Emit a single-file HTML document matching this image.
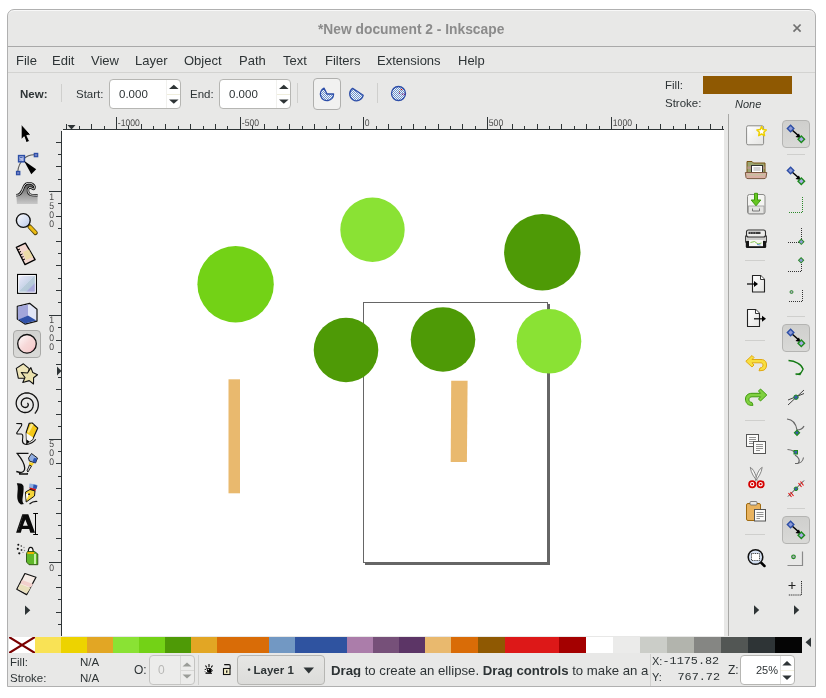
<!DOCTYPE html>
<html><head><meta charset="utf-8"><title>Inkscape</title>
<style>
html,body{margin:0;padding:0;}
#root{position:absolute;left:0;top:0;width:826px;height:698px;will-change:transform;}
body{width:826px;height:698px;overflow:hidden;background:#fff;position:relative;font-family:"Liberation Sans",sans-serif;color:#2e3436;}
.a{position:absolute;}
.win{left:7px;top:9px;width:807px;height:676px;border:1px solid #b0b0b0;border-radius:7px 7px 0 0;background:#e8e8e7;box-shadow:inset 0 1px 0 #f8f8f8;}
.t{position:absolute;white-space:nowrap;line-height:1;}
.menu{font-size:13px;color:#2e3436;top:54px;}
.rl{text-rendering:geometricPrecision;font-size:9.6px;fill:#4a4a4a;font-family:"Liberation Sans",sans-serif;}
.spin{position:absolute;background:#fff;border:1px solid #b6b6b3;border-radius:4px;box-sizing:border-box;}
.sep{position:absolute;width:1px;background:#cfcfcd;}
.hsep{position:absolute;height:1px;background:#cfcfcd;}
.btnp{position:absolute;box-sizing:border-box;border:1px solid #b4b4b2;border-radius:4px;background:#d4d4d2;}
</style></head>
<body><div id="root">
<div class="a win"></div>
<!-- title -->
<div class="t" style="left:318px;top:22.5px;font-size:13.8px;font-weight:bold;color:#8b8b8b;">*New document 2 - Inkscape</div>
<svg class="a" style="left:792px;top:23px" width="10" height="10"><path d="M1.5 1.5 L8.6 8.6 M8.6 1.5 L1.5 8.6" stroke="#707070" stroke-width="1.7"/></svg>
<div class="a" style="left:8px;top:46px;width:807px;height:1px;background:#a9a9a9"></div>
<!-- menu -->
<div class="t menu" style="left:16px">File</div>
<div class="t menu" style="left:52px">Edit</div>
<div class="t menu" style="left:91px">View</div>
<div class="t menu" style="left:135px">Layer</div>
<div class="t menu" style="left:184px">Object</div>
<div class="t menu" style="left:239px">Path</div>
<div class="t menu" style="left:283px">Text</div>
<div class="t menu" style="left:325px">Filters</div>
<div class="t menu" style="left:377px">Extensions</div>
<div class="t menu" style="left:458px">Help</div>
<div class="a" style="left:8px;top:72px;width:807px;height:1px;background:#d3d3d1"></div>
<!-- tool controls -->
<div class="t" style="left:20px;top:89px;font-size:11.5px;font-weight:bold;">New:</div>
<div class="sep" style="left:61px;top:84px;height:18px"></div>
<div class="t" style="left:76px;top:89px;font-size:11.5px;">Start:</div>
<div class="spin" style="left:109px;top:79px;width:72px;height:30px"></div>
<div class="t" style="left:119px;top:89px;font-size:11.5px;">0.000</div>
<svg class="a" style="left:166px;top:80px" width="14" height="28"><rect x="0" y="0" width="1" height="28" fill="#f1f1ee"/><rect x="1" y="14" width="13" height="1" fill="#efeddc"/><path d="M3 9 L7.8 4.8 L12.6 9 Z M3 19.5 L7.8 23.8 L12.6 19.5 Z" fill="#2e3436"/></svg>
<div class="t" style="left:190px;top:89px;font-size:11.5px;">End:</div>
<div class="spin" style="left:219px;top:79px;width:72px;height:30px"></div>
<div class="t" style="left:229px;top:89px;font-size:11.5px;">0.000</div>
<svg class="a" style="left:276px;top:80px" width="14" height="28"><rect x="0" y="0" width="1" height="28" fill="#f1f1ee"/><rect x="1" y="14" width="13" height="1" fill="#efeddc"/><path d="M3 9 L7.8 4.8 L12.6 9 Z M3 19.5 L7.8 23.8 L12.6 19.5 Z" fill="#2e3436"/></svg>
<div class="sep" style="left:297px;top:83px;height:20px"></div>
<div class="a" style="left:313px;top:78px;width:28px;height:32px;box-sizing:border-box;border:1px solid #b0b0ae;border-radius:4px;background:#f1f1f0"></div>
<div class="sep" style="left:377px;top:83px;height:20px"></div>
<svg class="a" style="left:0;top:0" width="420" height="110"><defs><pattern id="chk" width="2" height="2" patternUnits="userSpaceOnUse"><rect width="2" height="2" fill="#f4f6fa"/><rect width="1" height="1" fill="#6c94cc"/><rect x="1" y="1" width="1" height="1" fill="#6c94cc"/></pattern></defs>
<path d="M327 94 L333.6 94 A6.6 6.6 0 1 1 324 88.1 Z" fill="url(#chk)" stroke="#2d4ea8" stroke-width="1.3" stroke-linejoin="round"/>
<path d="M363.2 95.2 A6.8 6.8 0 1 1 352.6 88.4 Z" fill="url(#chk)" stroke="#2d4ea8" stroke-width="1.3" stroke-linejoin="round"/>
<circle cx="398.5" cy="93.5" r="7" fill="url(#chk)" stroke="#2d4ea8" stroke-width="1.3"/>
<circle cx="401.5" cy="89.5" r="0.8" fill="#b01010"/><circle cx="399.5" cy="91.5" r="0.6" fill="#806040"/><circle cx="399.5" cy="93.3" r="0.7" fill="#702080"/><circle cx="402.5" cy="94.3" r="0.7" fill="#702080"/><circle cx="404.5" cy="94.3" r="0.7" fill="#702080"/>
</svg>
<div class="t" style="left:665px;top:80px;font-size:11.5px;">Fill:</div>
<div class="a" style="left:703px;top:76px;width:89px;height:18px;background:#8f5902"></div>
<div class="t" style="left:665px;top:98px;font-size:11.5px;">Stroke:</div>
<div class="t" style="left:735px;top:98.5px;font-size:11px;font-style:italic;">None</div>
<!-- rulers & canvas -->
<div class="a" style="left:62px;top:130px;width:662px;height:506px;background:#fff;overflow:hidden"><svg style="position:absolute;left:-62px;top:-130px" width="826" height="698">
<rect x="365" y="304" width="185" height="261" fill="#666"/>
<rect x="363.5" y="302.5" width="184" height="260" fill="#fff" stroke="#666" stroke-width="1"/>
<circle cx="372.5" cy="229.8" r="32.2" fill="#8ae234"/>
<circle cx="235.6" cy="284.2" r="38.2" fill="#73d216"/>
<circle cx="542.3" cy="252.3" r="38.2" fill="#4e9a06"/>
<circle cx="346" cy="350" r="32.3" fill="#4e9a06"/>
<circle cx="443" cy="339.5" r="32.3" fill="#4e9a06"/>
<circle cx="549" cy="341.3" r="32.3" fill="#8ae234"/>
<rect x="228.5" y="379.3" width="11.5" height="114" fill="#e9b96e"/>
<path d="M451.2 380.8 L467.6 380.8 L466.9 462 L450.7 462 Z" fill="#e9b96e"/>
</svg>
</div>
<svg class="a" style="left:0;top:0" width="826" height="698" fill="#2e3436"><rect x="66" y="124" width="1" height="6"/><rect x="79" y="126" width="1" height="4"/><rect x="91" y="124" width="1" height="6"/><rect x="104" y="126" width="1" height="4"/><rect x="116" y="117" width="1" height="13"/><text transform="translate(117.8 126) scale(0.9 1)" class="rl">-1000</text><rect x="128" y="126" width="1" height="4"/><rect x="141" y="124" width="1" height="6"/><rect x="153" y="126" width="1" height="4"/><rect x="165" y="124" width="1" height="6"/><rect x="178" y="126" width="1" height="4"/><rect x="190" y="124" width="1" height="6"/><rect x="203" y="126" width="1" height="4"/><rect x="215" y="124" width="1" height="6"/><rect x="227" y="126" width="1" height="4"/><rect x="240" y="117" width="1" height="13"/><text transform="translate(241.8 126) scale(0.9 1)" class="rl">-500</text><rect x="252" y="126" width="1" height="4"/><rect x="264" y="124" width="1" height="6"/><rect x="277" y="126" width="1" height="4"/><rect x="289" y="124" width="1" height="6"/><rect x="302" y="126" width="1" height="4"/><rect x="314" y="124" width="1" height="6"/><rect x="326" y="126" width="1" height="4"/><rect x="339" y="124" width="1" height="6"/><rect x="351" y="126" width="1" height="4"/><rect x="363" y="117" width="1" height="13"/><text transform="translate(364.8 126) scale(0.9 1)" class="rl">0</text><rect x="376" y="126" width="1" height="4"/><rect x="388" y="124" width="1" height="6"/><rect x="401" y="126" width="1" height="4"/><rect x="413" y="124" width="1" height="6"/><rect x="425" y="126" width="1" height="4"/><rect x="438" y="124" width="1" height="6"/><rect x="450" y="126" width="1" height="4"/><rect x="462" y="124" width="1" height="6"/><rect x="475" y="126" width="1" height="4"/><rect x="487" y="117" width="1" height="13"/><text transform="translate(488.8 126) scale(0.9 1)" class="rl">500</text><rect x="500" y="126" width="1" height="4"/><rect x="512" y="124" width="1" height="6"/><rect x="524" y="126" width="1" height="4"/><rect x="537" y="124" width="1" height="6"/><rect x="549" y="126" width="1" height="4"/><rect x="561" y="124" width="1" height="6"/><rect x="574" y="126" width="1" height="4"/><rect x="586" y="124" width="1" height="6"/><rect x="599" y="126" width="1" height="4"/><rect x="611" y="117" width="1" height="13"/><text transform="translate(612.8 126) scale(0.9 1)" class="rl">1000</text><rect x="623" y="126" width="1" height="4"/><rect x="636" y="124" width="1" height="6"/><rect x="648" y="126" width="1" height="4"/><rect x="660" y="124" width="1" height="6"/><rect x="673" y="126" width="1" height="4"/><rect x="685" y="124" width="1" height="6"/><rect x="698" y="126" width="1" height="4"/><rect x="710" y="124" width="1" height="6"/><rect x="722" y="126" width="1" height="4"/><rect x="63" y="129" width="661" height="1"/><path d="M67.5 125 L75.5 125 L71.5 129.5 Z"/></svg>
<svg class="a" style="left:0;top:0" width="826" height="698" fill="#2e3436"><rect x="56" y="142" width="6" height="1"/><rect x="58" y="154" width="4" height="1"/><rect x="56" y="166" width="6" height="1"/><rect x="58" y="179" width="4" height="1"/><rect x="49" y="191" width="13" height="1"/><text transform="translate(49.2 199.60) scale(0.9 1)" class="rl">1</text><text transform="translate(49.2 208.60) scale(0.9 1)" class="rl">5</text><text transform="translate(49.2 217.60) scale(0.9 1)" class="rl">0</text><text transform="translate(49.2 226.60) scale(0.9 1)" class="rl">0</text><rect x="58" y="203" width="4" height="1"/><rect x="56" y="216" width="6" height="1"/><rect x="58" y="228" width="4" height="1"/><rect x="56" y="241" width="6" height="1"/><rect x="58" y="253" width="4" height="1"/><rect x="56" y="265" width="6" height="1"/><rect x="58" y="278" width="4" height="1"/><rect x="56" y="290" width="6" height="1"/><rect x="58" y="302" width="4" height="1"/><rect x="49" y="315" width="13" height="1"/><text transform="translate(49.2 323.27) scale(0.9 1)" class="rl">1</text><text transform="translate(49.2 332.27) scale(0.9 1)" class="rl">0</text><text transform="translate(49.2 341.27) scale(0.9 1)" class="rl">0</text><text transform="translate(49.2 350.27) scale(0.9 1)" class="rl">0</text><rect x="58" y="327" width="4" height="1"/><rect x="56" y="340" width="6" height="1"/><rect x="58" y="352" width="4" height="1"/><rect x="56" y="364" width="6" height="1"/><rect x="58" y="377" width="4" height="1"/><rect x="56" y="389" width="6" height="1"/><rect x="58" y="401" width="4" height="1"/><rect x="56" y="414" width="6" height="1"/><rect x="58" y="426" width="4" height="1"/><rect x="49" y="439" width="13" height="1"/><text transform="translate(49.2 446.93) scale(0.9 1)" class="rl">5</text><text transform="translate(49.2 455.93) scale(0.9 1)" class="rl">0</text><text transform="translate(49.2 464.93) scale(0.9 1)" class="rl">0</text><rect x="58" y="451" width="4" height="1"/><rect x="56" y="463" width="6" height="1"/><rect x="58" y="476" width="4" height="1"/><rect x="56" y="488" width="6" height="1"/><rect x="58" y="500" width="4" height="1"/><rect x="56" y="513" width="6" height="1"/><rect x="58" y="525" width="4" height="1"/><rect x="56" y="538" width="6" height="1"/><rect x="58" y="550" width="4" height="1"/><rect x="49" y="562" width="13" height="1"/><text transform="translate(49.2 570.60) scale(0.9 1)" class="rl">0</text><rect x="58" y="575" width="4" height="1"/><rect x="56" y="587" width="6" height="1"/><rect x="58" y="599" width="4" height="1"/><rect x="56" y="612" width="6" height="1"/><rect x="58" y="624" width="4" height="1"/><rect x="61" y="131" width="1" height="505"/><path d="M57 366.5 L57 375.5 L61.5 371 Z"/></svg>
<div class="a" style="left:728px;top:114px;width:1px;height:522px;background:#a8a8a6"></div>
<div class="a" style="left:13px;top:330px;width:28px;height:28px;box-sizing:border-box;border:1px solid #a9a9a7;border-radius:4px;background:linear-gradient(#d2d2d0,#dadad8)"></div>
<svg class="a" style="left:0;top:0" width="60" height="640">
<defs>
<linearGradient id="grect" x1="0" y1="0" x2="1" y2="1"><stop offset="0" stop-color="#ffffff"/><stop offset="0.2" stop-color="#dfe2f4"/><stop offset="0.48" stop-color="#c9d5e8"/><stop offset="0.5" stop-color="#b8ccda"/><stop offset="0.68" stop-color="#b4c8d8"/><stop offset="0.7" stop-color="#a7a7da"/><stop offset="1" stop-color="#a7a7da"/></linearGradient>
<linearGradient id="gell" x1="0" y1="0" x2="1" y2="1"><stop offset="0" stop-color="#ffffff"/><stop offset="0.5" stop-color="#f6d8d8"/><stop offset="0.75" stop-color="#f6d0d0"/><stop offset="0.8" stop-color="#f7bcc6"/><stop offset="1" stop-color="#f7bcc6"/></linearGradient>
<linearGradient id="gwave" x1="0" y1="0" x2="0" y2="1"><stop offset="0" stop-color="#555"/><stop offset="0.55" stop-color="#9a9a9a"/><stop offset="1" stop-color="#c8c8c8"/></linearGradient>
<linearGradient id="gzoom" x1="0" y1="0" x2="1" y2="1"><stop offset="0" stop-color="#ffffff"/><stop offset="1" stop-color="#b8c8ea"/></linearGradient>
</defs>
<!-- selector -->
<path d="M21.2 124.3 L21.2 139.5 L24.2 136.7 L26.2 142.6 L29.6 141.3 L26.8 135.5 L30.8 134.9 Z" fill="#000" stroke="#fff" stroke-width="0.8" stroke-linejoin="round"/>
<!-- node -->
<path d="M34 154.8 C27 154.8 19 160 17.8 171.5" fill="none" stroke="#5a5a5a" stroke-width="1.1"/>
<rect x="18.6" y="155.6" width="5.8" height="6.2" fill="#b4bee6" stroke="#2c4ea6" stroke-width="1.5"/>
<path d="M20 157.5 L22.5 157.5 M20 159.5 L21 160.5" stroke="#2c4ea6" stroke-width="0.8"/>
<rect x="34.3" y="153.4" width="3.4" height="3.3" fill="#6d7cc4" stroke="#2c4ea6" stroke-width="1.2"/>
<rect x="16.5" y="171.4" width="3.3" height="3.3" fill="#6d7cc4" stroke="#2c4ea6" stroke-width="1.2"/>
<path d="M24 160.8 L36.2 169.3 L31.3 174.3 Z" fill="#000"/>
<!-- tweak -->
<path d="M16.5 196.5 L16.5 195.3 C20 195.3 21 193 22.5 190 C24 186 25 183.5 28 183.2 C31 183 33.5 184 34.5 186.5 C35 188 34 189.5 32.5 188.5 C31 187.5 30 187 29 187.8 C27.5 189 27.5 193 30 194.5 C31.5 195.3 34 195.2 37.6 195.3 L37.6 204 L16.9 204 Z" fill="url(#gwave)"/>
<path d="M16.2 195.3 C20 195.3 21 193 22.5 190 C24 186 25 183.5 28 183.2 C31 183 33.5 184 34.5 186.5 C35 188 34 189.5 32.5 188.5 C31 187.5 30 187 29 187.8 C27.5 189 27.5 193 30 194.5 C31.5 195.3 34 195.2 37.6 195.3" fill="none" stroke="#111" stroke-width="2.5"/>
<path d="M16.2 195.3 C20 195.3 21 193 22.5 190 C24 186 25 183.5 28 183.2 C31 183 33.5 184 34.5 186.5 C35 188 34 189.5 32.5 188.5 C31 187.5 30 187 29 187.8 C27.5 189 27.5 193 30 194.5 C31.5 195.3 34 195.2 37.6 195.3" fill="none" stroke="#f4f4f4" stroke-width="0.9"/>
<!-- zoom -->
<path d="M29.5 226.5 L35.5 232.8" stroke="#5a4a10" stroke-width="4.6" stroke-linecap="round"/>
<path d="M30 227 L35.3 232.5" stroke="#ecbb10" stroke-width="3" stroke-linecap="round"/>
<circle cx="23.3" cy="220.5" r="6.9" fill="url(#gzoom)" stroke="#111" stroke-width="1.4"/>
<!-- measure -->
<path d="M16.3 247.3 L25.4 243.2 L35.1 259.6 L25 264.6 Z" fill="#f2d6cf" stroke="#000" stroke-width="1.3" stroke-linejoin="round"/>
<path d="M23 252 L29 249.5 L33 257 L26 260 Z" fill="#e8dc9c" opacity="0.8"/>
<path d="M17.5 250 L20 249 M18.8 252.5 L21 251.5 M20 255 L22.5 254 M21.4 257.5 L23.5 256.6 M22.7 260 L25 259" stroke="#000" stroke-width="1"/>
<!-- rect -->
<rect x="17.6" y="274.5" width="18.8" height="18.8" fill="url(#grect)" stroke="#000" stroke-width="1.2"/>
<rect x="18.7" y="275.6" width="16.6" height="16.6" fill="none" stroke="#fff" stroke-width="0.9"/>
<!-- 3d box -->
<path d="M29.6 303.3 L17.3 306.4 L17.3 319 L24.9 324.1 L37 321.1 L37 309.2 Z" fill="#e2e6f6" stroke="#111" stroke-width="1.2" stroke-linejoin="round"/>
<path d="M17.8 306.8 L28 304.5 L28 315.5 L18 320 Z" fill="#a2a6da"/>
<path d="M18.5 319.5 L28 315.6 L36.3 320.6 L25 323.5 Z" fill="#3051a8"/>
<!-- ellipse -->
<circle cx="27" cy="343.8" r="9.3" fill="url(#gell)" stroke="#111" stroke-width="1.3"/>
<!-- star -->
<path d="M23.4 363.8 L16.3 368.4 L18.3 378.2 L27.5 378.2 L29.2 368.6 Z" fill="#efe6b8" stroke="#111" stroke-width="1.1" stroke-linejoin="round"/>
<path d="M30.9 367.6 L32.8 372.6 L37.5 374.8 L33.6 377.8 L33.5 384 L29.2 380.6 L22.8 382.5 L25 377.5 L21.3 372.5 L27.5 373 Z" fill="#ebe2ae" stroke="#111" stroke-width="1.1" stroke-linejoin="round"/>
<!-- spiral -->
<path d="M27.3 403.1 L27.5 403.2 L27.6 403.3 L27.7 403.4 L27.8 403.5 L27.9 403.7 L28.0 403.8 L28.1 404.0 L28.2 404.2 L28.2 404.4 L28.2 404.6 L28.3 404.8 L28.2 405.0 L28.2 405.3 L28.1 405.5 L28.1 405.7 L27.9 405.9 L27.8 406.2 L27.7 406.4 L27.5 406.6 L27.3 406.8 L27.1 406.9 L26.8 407.1 L26.6 407.2 L26.3 407.3 L26.0 407.4 L25.7 407.4 L25.4 407.5 L25.1 407.5 L24.7 407.4 L24.4 407.4 L24.1 407.3 L23.8 407.2 L23.4 407.0 L23.1 406.8 L22.8 406.6 L22.6 406.4 L22.3 406.1 L22.1 405.8 L21.9 405.5 L21.7 405.1 L21.5 404.8 L21.4 404.4 L21.3 404.0 L21.3 403.6 L21.3 403.1 L21.3 402.7 L21.4 402.3 L21.5 401.8 L21.6 401.4 L21.8 401.0 L22.0 400.6 L22.3 400.2 L22.6 399.8 L22.9 399.5 L23.3 399.2 L23.7 398.9 L24.1 398.7 L24.6 398.4 L25.1 398.3 L25.6 398.1 L26.1 398.1 L26.6 398.0 L27.1 398.0 L27.7 398.1 L28.2 398.2 L28.7 398.3 L29.3 398.5 L29.8 398.8 L30.3 399.1 L30.7 399.4 L31.2 399.8 L31.6 400.2 L31.9 400.7 L32.3 401.2 L32.6 401.7 L32.8 402.3 L33.0 402.9 L33.1 403.5 L33.2 404.1 L33.3 404.8 L33.2 405.4 L33.1 406.0 L33.0 406.7 L32.8 407.3 L32.6 407.9 L32.2 408.5 L31.9 409.1 L31.5 409.7 L31.0 410.2 L30.5 410.6 L29.9 411.1 L29.3 411.4 L28.7 411.8 L28.0 412.0 L27.3 412.3 L26.6 412.4 L25.8 412.5 L25.1 412.5 L24.3 412.5 L23.6 412.4 L22.8 412.2 L22.1 411.9 L21.4 411.6 L20.7 411.3 L20.0 410.8 L19.4 410.3 L18.8 409.8 L18.3 409.1 L17.8 408.5 L17.4 407.8 L17.0 407.0 L16.7 406.3 L16.5 405.4 L16.3 404.6 L16.2 403.8 L16.2 402.9 L16.3 402.0 L16.4 401.2 L16.6 400.3 L16.9 399.5 L17.3 398.7 L17.7 397.9 L18.3 397.1 L18.8 396.4 L19.5 395.8 L20.2 395.2 L20.9 394.7 L21.7 394.2 L22.6 393.8 L23.5 393.5 L24.4 393.2 L25.4 393.0 L26.3 393.0 L27.3 393.0 L28.3 393.0 L29.2 393.2 L30.2 393.5 L31.1 393.8 L32.0 394.2 L32.9 394.7 L33.7 395.3 L34.5 396.0 L35.2 396.7 L35.9 397.5 L36.5 398.4 L37.0 399.3 L37.4 400.2 L37.8 401.2 L38.1 402.3 L38.2 403.3 L38.3 404.4 L38.3 405.5 L38.2 406.6 L38.0 407.6 L37.7 408.7 L37.3 409.7 L36.8 410.7 L36.2 411.7 L35.6 412.6 L34.8 413.5" fill="none" stroke="#111" stroke-width="1.3"/>
<!-- pencil -->
<path d="M16.3 423.5 L21.3 423.6 C22 424 21.8 425.2 21.3 426 L16.7 433 C16.5 433.8 17 434 18 434 L21.3 434 C23 434.3 23 436 22.7 438 C22.3 440 22.3 443.5 25 444.2 C27 444.6 28 444.3 29.5 443.8 C33 442.3 35 440.5 35.6 439.2" fill="none" stroke="#111" stroke-width="1.1"/>
<path d="M29.2 423.3 L32.2 423 L37.8 428.1 L32.6 439.5 L26.6 443.6 L26.2 432.2 Z" fill="#f4c818" stroke="#111" stroke-width="1.1" stroke-linejoin="round"/>
<path d="M31 423.5 L33.5 424.5 L29 433 L27.3 432 Z" fill="#fbe98a"/>
<path d="M26.4 433 L33 437.5 L32.4 439.6 L26.7 443.4 Z" fill="#fbfbf8"/>
<path d="M26.7 443.8 L26.5 439.5 L29.5 441.5 Z" fill="#000"/>
<!-- pen -->
<path d="M16.4 453.3 L28.5 453.3 M17.5 453.8 C21 458 24.5 463 24.7 468 C24.8 471 23 472.5 20 472.5 L16.3 471.5 M19.3 471.8 L19.7 474 L27.3 474 L27.5 473" fill="none" stroke="#111" stroke-width="1.3"/>
<path d="M31.5 453.5 L37.5 458 L35.5 463 L29.3 461 L28.5 458 Z" fill="#92aee0" stroke="#111" stroke-width="0.9"/>
<path d="M34 458 L37.3 458.5 L35.5 462.8 L32.5 461.5 Z" fill="#2d55b5"/>
<path d="M29.2 462 L34 463.5 L32 466 L29.2 465 Z" fill="#f5d020"/>
<path d="M29.5 465 L31.5 466 L28 472 L27 471 Z" fill="#ddd" stroke="#111" stroke-width="0.9"/>
<!-- calligraphy -->
<path d="M16.8 483.3 C20 483 22.5 483.5 23.5 486 C24 490 23 495 22.5 499 C22.3 501.5 22.8 503 24 504 L21 504.5 C18.5 503 17 500 17.3 495 C17.5 491 18.5 487 16.8 483.3 Z" fill="#0a0a0a"/>
<path d="M29.5 483.5 L36.5 484.5 L35.5 489 L29 488 Z" fill="#8eb0e0"/>
<path d="M33.5 484.5 L37.5 485.5 L36.5 489 L33 488.5 Z" fill="#2d55b5"/>
<path d="M29.5 487.5 L36 489 L35.5 491 L30 490.3 Z" fill="#d01010"/>
<path d="M25.5 492 L30 489.5 L35 491 L34.5 496 L26.2 502 Z" fill="#f4d43a" stroke="#111" stroke-width="1"/>
<path d="M26 494 L29.5 492.5 L26.5 500 Z" fill="#fff"/>
<circle cx="29" cy="494.2" r="0.9" fill="#000"/>
<path d="M29.5 504 C32 502 34 501 37.3 501.5" fill="none" stroke="#111" stroke-width="1.2"/>
<!-- text -->
<path d="M16.1 532.8 L22.3 514.2 L28.3 514.2 L35 532.8 L30.3 532.8 L29.2 529 L21.9 529 L20.8 532.8 Z M25.3 519.4 L22.9 525.8 L27.8 525.8 Z" fill="#0a0a0a" fill-rule="evenodd"/>
<path d="M22.8 515.5 L18 531" stroke="#555" stroke-width="0.8" stroke-dasharray="0.8 0.8"/>
<path d="M35.5 513.8 L35.5 534.3 M33.2 513.5 L38 513.5 M33.2 534.5 L38 534.5" stroke="#000" stroke-width="1"/>
<!-- spray -->
<circle cx="18.3" cy="544.8" r="1" fill="#111"/><circle cx="21.3" cy="546" r="0.8" fill="#333"/><circle cx="17.8" cy="548.8" r="1.1" fill="#111"/><circle cx="21.5" cy="550" r="0.9" fill="#333"/><circle cx="19.3" cy="553.3" r="1.1" fill="#111"/><circle cx="24" cy="547.5" r="0.7" fill="#888"/><circle cx="24.5" cy="550.5" r="0.7" fill="#888"/><circle cx="23" cy="552.5" r="0.6" fill="#888"/>
<path d="M28.3 552 C28.3 548.5 29.3 547.3 30.7 547.3 C32.2 547.3 33.2 548.5 33.2 552" fill="#fafafa" stroke="#111" stroke-width="1.2"/>
<path d="M26.5 553.5 L27.5 551.5 L34.5 551.5 L37.8 554 L37.8 564.7 L29 564.7 L26.5 562 Z" fill="#5fb82a" stroke="#2a5010" stroke-width="0.9"/>
<path d="M34 554 L36 554 L36 564 L34 564 Z" fill="#c8f0a8"/>
<path d="M27.5 552 L34 552 L34 554 L27.5 554 Z" fill="#e8b400"/>
<!-- eraser -->
<path d="M24.9 573.5 L36 577.2 L26.6 594.6 L16.8 589.2 Z" fill="#f6ece6" stroke="#111" stroke-width="1.2" stroke-linejoin="round"/>
<path d="M20 584 L30.5 588 L26.8 593.5 L17.8 588.8 Z" fill="#e9e0bc"/>
<path d="M22 580 L33 584 L31 587.5 L20.5 583.5 Z" fill="#f2d0cc"/>
<!-- more arrow -->
<path d="M25 605.5 L30.3 610.3 L25 615 Z" fill="#2e3436"/>
</svg>

<div class="btnp" style="left:782px;top:120px;width:28px;height:28px;background:linear-gradient(#cfcfcd,#d9d9d7)"></div>
<div class="btnp" style="left:782px;top:324px;width:28px;height:28px;background:linear-gradient(#cfcfcd,#d9d9d7)"></div>
<div class="btnp" style="left:782px;top:516px;width:28px;height:28px;background:linear-gradient(#cfcfcd,#d9d9d7)"></div>
<svg class="a" style="left:0;top:0" width="826" height="640">
<defs>
<linearGradient id="gdoc" x1="0" y1="0" x2="1" y2="1"><stop offset="0" stop-color="#ffffff"/><stop offset="1" stop-color="#e4e4e2"/></linearGradient>
<symbol id="conn" viewBox="0 0 20 20">
<path d="M5.5 5.5 L13.5 12.5" stroke="#000" stroke-width="1.5"/><path d="M14.5 14 L9.5 13 L13 9.5 Z" fill="#000"/>
<rect x="2.3" y="2.3" width="4.6" height="4.6" transform="rotate(45 4.6 4.6)" fill="#8e9ad6" stroke="#2c4ea6" stroke-width="1.4"/>
<rect x="13" y="13" width="4.6" height="4.6" transform="rotate(45 15.3 15.3)" fill="#a8a8e6" stroke="#1d8a1d" stroke-width="1.4"/>
</symbol>
</defs>
<!-- separators left column -->
<rect x="745" y="260" width="20" height="1" fill="#cfcfcd"/>
<rect x="745" y="340" width="20" height="1" fill="#cfcfcd"/>
<rect x="745" y="420" width="20" height="1" fill="#cfcfcd"/>
<rect x="745" y="534" width="20" height="1" fill="#cfcfcd"/>
<rect x="787" y="154" width="18" height="1" fill="#cfcfcd"/>
<rect x="787" y="316" width="18" height="1" fill="#cfcfcd"/>
<rect x="787" y="508" width="18" height="1" fill="#cfcfcd"/>
<!-- new -->
<rect x="746.6" y="125.8" width="17" height="19" rx="1.5" fill="url(#gdoc)" stroke="#8a8a88" stroke-width="1"/>
<path d="M761.6 126.5 L763 129.6 L766.3 130 L763.8 132.3 L764.5 135.6 L761.6 134 L758.7 135.6 L759.4 132.3 L756.9 130 L760.2 129.6 Z" fill="#fff" stroke="#eed000" stroke-width="1.5" stroke-linejoin="round"/>
<!-- open -->
<path d="M747 161.5 L752 161.5 L753.5 163 L765 163 L765 173 L747 173 Z" fill="#9aa470" stroke="#7a5210" stroke-width="1"/>
<rect x="747.5" y="166.5" width="17" height="2.5" fill="#b8968a"/>
<rect x="751.5" y="165.5" width="11" height="9" fill="#fff" stroke="#333" stroke-width="1"/>
<path d="M753.5 168 L760.5 168 M753.5 170 L760.5 170" stroke="#888" stroke-width="0.7"/>
<path d="M745.3 172.5 L766.8 172.5 L766 177.5 C765.8 178.3 765 178.6 764 178.6 L748 178.6 C747 178.6 746.2 178.3 746 177.5 Z" fill="#d9b0a4" stroke="#7a5a40" stroke-width="1"/>
<rect x="747" y="174" width="18" height="1.5" fill="#c8c0a0"/>
<!-- save -->
<rect x="747.5" y="194.5" width="17.5" height="19.5" rx="2" fill="#f4f4f2" stroke="#8a8a88" stroke-width="1"/>
<rect x="748.5" y="206" width="15.5" height="7.5" fill="#e4e4e2" stroke="#999" stroke-width="0.8"/>
<path d="M752.5 208.5 L752.5 211 L759.5 211 L759.5 208.5" fill="none" stroke="#777" stroke-width="1"/>
<path d="M754.5 193.3 L757.5 193.3 L757.5 200 L760.8 200 L756 205.8 L751.2 200 L754.5 200 Z" fill="#66c622" stroke="#3f9a0d" stroke-width="1" stroke-linejoin="round"/>
<!-- print -->
<rect x="745.5" y="236" width="21" height="6" fill="#cfcfcd" stroke="#444" stroke-width="1"/>
<rect x="746.5" y="230" width="19" height="7" rx="2" fill="#ececea" stroke="#2e2e2e" stroke-width="1.1"/>
<rect x="748.5" y="231.8" width="12" height="2.2" fill="#3a3a3a"/>
<path d="M750 233 L751 233 M752.5 233 L753.5 233 M755 233 L756 233" stroke="#bbb" stroke-width="0.8"/>
<rect x="745.8" y="241" width="20.4" height="7" rx="1.2" fill="#161616"/>
<rect x="749" y="240" width="14" height="6.2" fill="#f6f6f4"/>
<path d="M750.5 242.5 L754.5 241.5 L758 244 L761.5 243" stroke="#7ac040" stroke-width="0.9" fill="none"/>
<path d="M757 244.5 L760.5 245" stroke="#3b78d0" stroke-width="0.8"/>
<!-- import -->
<path d="M752.5 275.5 L760.5 275.5 L764.5 279.5 L764.5 292 L752.5 292 Z" fill="url(#gdoc)" stroke="#222" stroke-width="1.1" stroke-linejoin="round"/>
<path d="M760.5 275.5 L760.5 279.5 L764.5 279.5" fill="#fff" stroke="#222" stroke-width="0.9"/>
<path d="M747 284 L755 284" stroke="#111" stroke-width="1.3"/><path d="M754 281 L758 284 L754 287 Z" fill="#000"/>
<!-- export -->
<path d="M747.5 309.5 L755.5 309.5 L759.5 313.5 L759.5 326.5 L747.5 326.5 Z" fill="url(#gdoc)" stroke="#222" stroke-width="1.1" stroke-linejoin="round"/>
<path d="M755.5 309.5 L755.5 313.5 L759.5 313.5" fill="#fff" stroke="#222" stroke-width="0.9"/>
<path d="M754 318.8 L763 318.8" stroke="#111" stroke-width="1.3"/><path d="M762 315.8 L766 318.8 L762 321.8 Z" fill="#000"/>
<!-- undo -->
<path d="M745.8 361.3 L752 355.5 L754 357.5 L752 359.5 L761 359.5 C765.5 359.5 766.5 362.5 766.5 365 C766.5 368 765 370.5 762 370.5 L759 370.8 L760 368 C762.5 367.5 763 366.5 763 365 C763 363.5 762 362.8 760 362.8 L752 362.8 L754 365 L752 367 Z" fill="#f8df40" stroke="#e0a810" stroke-width="1" stroke-linejoin="round"/>
<!-- redo -->
<path d="M766.8 395 L760.5 389 L758.5 391 L760.5 393.3 L752 393.3 C747.5 393.3 745.5 396 745.5 399 C745.5 402.5 747.5 405.3 751 405.3 L753 405.3 L752 402.5 C749.5 402 749 401 749 399.5 C749 397.8 750.3 396.8 752 396.8 L760.5 396.8 L758.5 399 L760.5 401 Z" fill="#80d040" stroke="#3f9a0d" stroke-width="1" stroke-linejoin="round"/>
<!-- copy -->
<rect x="746.5" y="434.5" width="12" height="12" fill="#fbfbfa" stroke="#555" stroke-width="1"/>
<path d="M749 437.5 L756 437.5 M749 439.5 L756 439.5 M749 441.5 L756 441.5 M749 443.5 L753 443.5" stroke="#777" stroke-width="0.8"/>
<rect x="753.5" y="441.5" width="12" height="12" fill="#fbfbfa" stroke="#555" stroke-width="1"/>
<path d="M756 444.5 L763 444.5 M756 446.5 L763 446.5 M756 448.5 L763 448.5 M756 450.5 L760 450.5" stroke="#777" stroke-width="0.8"/>
<!-- cut -->
<path d="M750.3 467.3 C752.8 468.5 756 474 757 480.5 C754.5 478 751 473 750.3 467.3 Z" fill="#f8f8f6" stroke="#777" stroke-width="0.9" stroke-linejoin="round"/>
<path d="M762.2 467.3 C759.7 468.5 756.5 474 755.5 480.5 C758 478 761.5 473 762.2 467.3 Z" fill="#f8f8f6" stroke="#777" stroke-width="0.9" stroke-linejoin="round"/>
<circle cx="752.2" cy="484.2" r="3.1" fill="#fff" stroke="#d40000" stroke-width="1.8"/>
<circle cx="760.6" cy="484.2" r="3.1" fill="#fff" stroke="#d40000" stroke-width="1.8"/>
<circle cx="752.2" cy="484.2" r="1.1" fill="#d40000"/><circle cx="760.6" cy="484.2" r="1.1" fill="#d40000"/>
<!-- paste -->
<rect x="746.5" y="503.5" width="14" height="17" rx="1.5" fill="#e8b25e" stroke="#a06a10" stroke-width="1"/>
<rect x="750" y="501.5" width="7" height="3.5" rx="1" fill="#e8e8e6" stroke="#666" stroke-width="0.8"/>
<rect x="754.5" y="509.5" width="11" height="11.5" fill="#fbfbfa" stroke="#555" stroke-width="1"/>
<path d="M756.5 512.5 L763.5 512.5 M756.5 514.5 L763.5 514.5 M756.5 516.5 L763.5 516.5 M756.5 518.5 L760 518.5" stroke="#777" stroke-width="0.8"/>
<!-- zoom page -->
<path d="M760.5 562 L764.5 566" stroke="#000" stroke-width="2.5" stroke-linecap="round"/>
<circle cx="755.5" cy="557" r="7.3" fill="#d4e0f2" stroke="#111" stroke-width="1.5"/>
<rect x="751.5" y="553.5" width="8" height="7" fill="#fff" stroke="#222" stroke-width="0.9" stroke-dasharray="1 0.8"/>
<!-- more arrows -->
<path d="M754 605.3 L759.2 610 L754 614.8 Z" fill="#2e3436"/>
<path d="M794 605.3 L799.2 610 L794 614.8 Z" fill="#2e3436"/>
<!-- right column -->
<use href="#conn" x="786" y="124" width="20" height="20"/>
<use href="#conn" x="786" y="166" width="20" height="20"/>
<use href="#conn" x="786" y="328" width="20" height="20"/>
<use href="#conn" x="786" y="520" width="20" height="20"/>
<path d="M802.5 197 L802.5 212.5 L788 212.5" fill="none" stroke="#2a8a2a" stroke-width="1" stroke-dasharray="1 1"/>
<path d="M801.5 228 L801.5 241 M788 242.5 L800 242.5" fill="none" stroke="#333" stroke-width="1" stroke-dasharray="1 1"/>
<rect x="799.5" y="240" width="3.6" height="3.6" transform="rotate(45 801.3 241.8)" fill="#8e9ad6" stroke="#2a8a2a" stroke-width="1"/>
<path d="M801.5 262 L801.5 271.5 L788 271.5" fill="none" stroke="#333" stroke-width="1" stroke-dasharray="1 1"/>
<rect x="799.3" y="258.5" width="3.6" height="3.6" transform="rotate(45 801.1 260.3)" fill="#8e9ad6" stroke="#2a8a2a" stroke-width="1"/>
<path d="M802.5 290 L802.5 301.5 L788 301.5" fill="none" stroke="#333" stroke-width="1" stroke-dasharray="1 1"/>
<circle cx="791.5" cy="292" r="1.5" fill="#aab" stroke="#2a8a2a" stroke-width="0.9"/>
<path d="M788.5 360.5 C795 361 801.5 364 803 369 C802.5 372 800 374 796 374.5 M803.5 368.5 L800 374.5 L795.5 374" fill="none" stroke="#137a13" stroke-width="1.3"/>
<path d="M788 405 L804 390 M788 400 L804 393.5" stroke="#444" stroke-width="1"/>
<circle cx="796" cy="397.2" r="2.2" fill="#3a5ab0" stroke="#1d8a1d" stroke-width="1"/>
<path d="M787 419 C793 419.5 796 424 797 430 M797 430 C800 430 803 428 804 426" fill="none" stroke="#666" stroke-width="1.2"/>
<rect x="795.2" y="431" width="3.6" height="3.6" transform="rotate(45 797 432.8)" fill="#3a5ab0" stroke="#1d8a1d" stroke-width="1.2"/>
<path d="M787.5 449.5 C790 449.5 792 450 795 452 M795 455 C798 457 801 460 798 463.5 L795 463.5 M803.5 457.5 C803 461 800 463.5 796.5 463.5" fill="none" stroke="#666" stroke-width="1.1"/>
<rect x="794" y="450.5" width="3.5" height="3.5" fill="#3a5ab0" stroke="#1d8a1d" stroke-width="1"/>
<path d="M788 496.5 L804 480.5" stroke="#444" stroke-width="1"/>
<path d="M788.5 493 L791.5 497 M790.5 492 L793.5 496 M798.5 483 L801.5 487 M800.5 481.5 L803.5 485.5" stroke="#e01010" stroke-width="1.1"/>
<circle cx="796" cy="488.8" r="1.8" fill="#3a5ab0" stroke="#1d8a1d" stroke-width="1"/>
<path d="M802.5 551.5 L802.5 565.5 L787.5 565.5" fill="none" stroke="#8a8a8a" stroke-width="1.2"/>
<circle cx="793.5" cy="556.8" r="1.8" fill="#aab" stroke="#1d8a1d" stroke-width="1.1"/>
<path d="M792 582 L792 589 M788.5 585.5 L795.5 585.5" stroke="#222" stroke-width="1.1"/>
<path d="M801.5 581 L801.5 595 L788 595" fill="none" stroke="#222" stroke-width="1" stroke-dasharray="1.2 0.9"/>
</svg>

<div class="a" style="left:9px;top:637px;width:26px;height:16px;background:#fff"></div><svg class="a" style="left:9px;top:637px" width="26" height="16"><path d="M0 0 L26 16 M26 0 L0 16" stroke="#7a0000" stroke-width="2.2"/></svg><div class="a" style="left:35px;top:637px;width:26px;height:16px;background:#f9e255"></div><div class="a" style="left:61px;top:637px;width:26px;height:16px;background:#edd300"></div><div class="a" style="left:87px;top:637px;width:26px;height:16px;background:#e2a624"></div><div class="a" style="left:113px;top:637px;width:26px;height:16px;background:#8ae234"></div><div class="a" style="left:139px;top:637px;width:26px;height:16px;background:#73d216"></div><div class="a" style="left:165px;top:637px;width:26px;height:16px;background:#4e9a06"></div><div class="a" style="left:191px;top:637px;width:26px;height:16px;background:#e2a624"></div><div class="a" style="left:217px;top:637px;width:52px;height:16px;background:#d96c07"></div><div class="a" style="left:269px;top:637px;width:26px;height:16px;background:#7298c3"></div><div class="a" style="left:295px;top:637px;width:52px;height:16px;background:#2f53a0"></div><div class="a" style="left:347px;top:637px;width:26px;height:16px;background:#ab7daa"></div><div class="a" style="left:373px;top:637px;width:26px;height:16px;background:#765079"></div><div class="a" style="left:399px;top:637px;width:26px;height:16px;background:#5c3566"></div><div class="a" style="left:425px;top:637px;width:26px;height:16px;background:#e9b96e"></div><div class="a" style="left:451px;top:637px;width:27px;height:16px;background:#d96c07"></div><div class="a" style="left:478px;top:637px;width:27px;height:16px;background:#8f5902"></div><div class="a" style="left:505px;top:637px;width:54px;height:16px;background:#dd1818"></div><div class="a" style="left:559px;top:637px;width:27px;height:16px;background:#a40000"></div><div class="a" style="left:586px;top:637px;width:27px;height:16px;background:#ffffff"></div><div class="a" style="left:613px;top:637px;width:27px;height:16px;background:#ebebea"></div><div class="a" style="left:640px;top:637px;width:27px;height:16px;background:#cbcdc8"></div><div class="a" style="left:667px;top:637px;width:27px;height:16px;background:#b2b4ad"></div><div class="a" style="left:694px;top:637px;width:27px;height:16px;background:#858683"></div><div class="a" style="left:721px;top:637px;width:27px;height:16px;background:#525654"></div><div class="a" style="left:748px;top:637px;width:27px;height:16px;background:#2e3436"></div><div class="a" style="left:775px;top:637px;width:27px;height:16px;background:#050505"></div><svg class="a" style="left:805px;top:637px" width="7" height="11"><path d="M6 0.5 L6 10 L0.5 5.2 Z" fill="#2e3436"/></svg>
<!-- status bar -->
<div class="t" style="left:10px;top:657px;font-size:11.5px;">Fill:</div>
<div class="t" style="left:10px;top:673px;font-size:11.5px;">Stroke:</div>
<div class="t" style="left:80px;top:657px;font-size:11.5px;">N/A</div>
<div class="t" style="left:80px;top:673px;font-size:11.5px;">N/A</div>
<div class="t" style="left:134px;top:664px;font-size:12px;">O:</div>
<div class="spin" style="left:149px;top:655px;width:46px;height:30px;background:#ececeb;border-color:#c4c4c2"></div>
<div class="t" style="left:158px;top:664px;font-size:12px;color:#b8b8b6">0</div>
<svg class="a" style="left:180px;top:656px" width="14" height="28"><path d="M2.5 10.5 L7 6.5 L11.5 10.5 Z M2.5 18.5 L7 22.5 L11.5 18.5 Z" fill="#9a9c98"/><rect x="0" y="0" width="1" height="28" fill="#d8d8d6"/><rect x="1" y="14" width="13" height="1" fill="#d8d8d6"/></svg>
<div class="sep" style="left:198px;top:655px;height:30px"></div>
<svg class="a" style="left:200px;top:660px" width="36" height="18">
<path d="M5.5 5.5 L6.8 7.5 M9 4 L9 7 M12.5 5.5 L11.2 7.5 M4.8 9.5 L6 10" stroke="#000" stroke-width="1.1"/>
<path d="M5 10 C6 8 11 7.5 12.3 10.5 C11.5 13.5 6.5 13.8 5 11.5" fill="#fff" stroke="#000" stroke-width="0.9"/>
<circle cx="9.2" cy="10.4" r="2.4" fill="#000"/><circle cx="8.4" cy="9.6" r="0.6" fill="#fff"/>
<path d="M5.5 13.5 L12 13.5" stroke="#222" stroke-width="0.9"/>
<path d="M24.2 4.6 L29 4.6 C29.8 4.6 30.2 5.2 30.2 6 L30.2 8.5" fill="none" stroke="#111" stroke-width="1.1"/>
<rect x="23.5" y="8.5" width="6.5" height="6" fill="#f6f0c8" stroke="#111" stroke-width="1.1"/>
<path d="M26 10.5 L27.5 10.5 L27.2 13 L26.4 13 Z" fill="#000"/>
</svg>
<div class="a" style="left:237px;top:655px;width:88px;height:30px;box-sizing:border-box;border:1px solid #b6b6b3;border-radius:4px;background:linear-gradient(#e6e6e4,#dcdcda)"></div>
<div class="t" style="left:247.5px;top:666px;font-size:9px;font-weight:bold;">•</div>
<div class="t" style="left:253.5px;top:665px;font-size:11.5px;font-weight:bold;">Layer 1</div>
<svg class="a" style="left:303px;top:667px" width="12" height="8"><path d="M0.5 0.5 L11 0.5 L5.75 6.5 Z" fill="#2e3436"/></svg>
<div class="t" style="left:331px;top:664px;font-size:13.2px;width:318px;overflow:hidden;"><b>Drag</b> to create an ellipse. <b>Drag controls</b> to make an a</div>
<div class="a" style="left:650px;top:654px;width:1px;height:32px;background:#d0d0ce"></div>
<div class="t" style="left:652px;top:656px;font-size:11px;">X:</div>
<div class="t" style="left:652px;top:672px;font-size:11px;">Y:</div>
<div class="t" style="left:662.5px;top:656px;font-size:11.8px;font-family:'Liberation Mono',monospace;">-1175.82</div>
<div class="t" style="left:677.5px;top:672px;font-size:11.8px;font-family:'Liberation Mono',monospace;">767.72</div>
<div class="t" style="left:728px;top:664px;font-size:12px;">Z:</div>
<div class="spin" style="left:740px;top:655px;width:55px;height:30px"></div>
<div class="t" style="left:756px;top:665px;font-size:11px;">25%</div>
<svg class="a" style="left:780px;top:656px" width="14" height="28"><path d="M2.3 9.5 L7 5 L11.7 9.5 Z M2.3 19.5 L7 24 L11.7 19.5 Z" fill="#2e3436"/><rect x="0" y="0" width="1" height="28" fill="#e2e2e0"/><rect x="1" y="14" width="13" height="1" fill="#f2f0e0"/></svg>
</div></body></html>
